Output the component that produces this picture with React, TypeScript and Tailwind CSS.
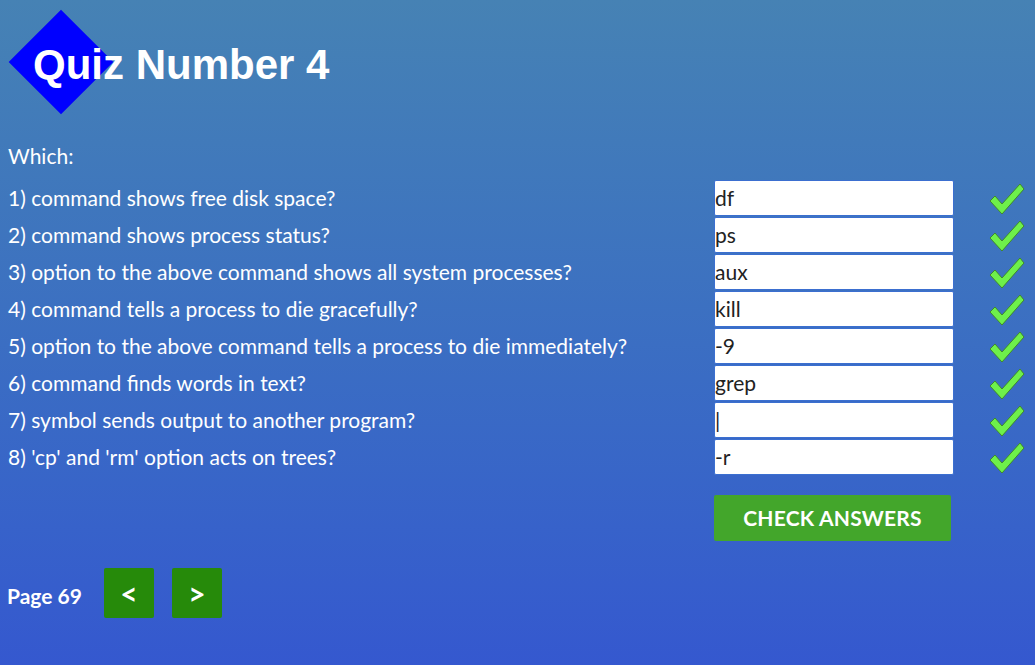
import React from "react";

const rows: [string, string][] = [
  ["1) command shows free disk space?", "df"],
  ["2) command shows process status?", "ps"],
  ["3) option to the above command shows all system processes?", "aux"],
  ["4) command tells a process to die gracefully?", "kill"],
  ["5) option to the above command tells a process to die immediately?", "-9"],
  ["6) command finds words in text?", "grep"],
  ["7) symbol sends output to another program?", "|"],
  ["8) 'cp' and 'rm' option acts on trees?", "-r"],
];

function Check() {
  return (
    <svg width="38" height="36" viewBox="0 0 38 36">
      <path
        d="M2 20 L7 15 L14 23 L32 3 L36 8 L14 33 Z"
        fill="#6ef04a"
        stroke="#3f8a2a"
        strokeWidth="1"
        strokeLinejoin="round"
      />
    </svg>
  );
}

export default function App() {
  return (
    <div
      className="w-[1035px] h-[665px] bg-gradient-to-b from-[#4682b4] to-[#3558cf] text-white overflow-hidden"
      style={{ fontFamily: "Lato, 'Liberation Sans', sans-serif" }}
    >
      <div className="relative h-[130px] pl-[33px] pt-[41px]">
        <div className="absolute left-[24px] top-[25px] w-[74px] h-[74px] bg-[#0000ff] rotate-45" />
        <h1
          className="relative text-[42px] font-bold leading-[48px] text-white"
          style={{ fontFamily: "'Liberation Sans', Arial, sans-serif" }}
        >
          Quiz Number 4
        </h1>
      </div>
      <div className="pl-[8px] text-[21px] leading-[24px] mt-[14px]">Which:</div>
      <div className="mt-[11px] flex flex-col">
        {rows.map(([q, a], i) => (
          <div key={i} className="flex items-center h-[37px]">
            <div className="w-[714px] pl-[8px] text-[21px] text-white">{q}</div>
            <div className="w-[240px] h-[36px] bg-white rounded-[2px] border border-[#3b6fd0] flex items-center text-[21px] text-[#222]">
              {a}
            </div>
            <div className="ml-[34px] mt-[3px] flex items-center">
              <Check />
            </div>
          </div>
        ))}
      </div>
      <div className="mt-[20px] pl-[714px]">
        <button className="w-[237px] h-[46px] bg-[#43a62b] rounded-[2px] text-white font-bold text-[21px] tracking-[0.2px]">
          CHECK ANSWERS
        </button>
      </div>
      <div className="mt-[27px] flex items-center pl-[7px]">
        <span className="font-bold text-[21px] w-[97px] mt-[6px]">Page 69</span>
        <button className="w-[50px] h-[50px] bg-[#268a0a] rounded-[2px] font-bold text-[30px] leading-none">&lt;</button>
        <button className="w-[50px] h-[50px] bg-[#268a0a] rounded-[2px] font-bold text-[30px] leading-none ml-[18px]">&gt;</button>
      </div>
    </div>
  );
}
